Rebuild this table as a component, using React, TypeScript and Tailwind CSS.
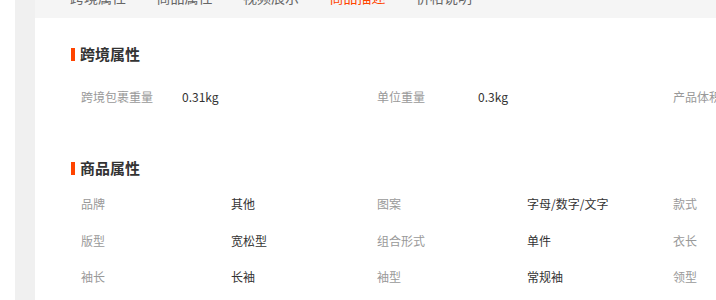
import React from 'react';

const tabs = ['跨境属性', '商品属性', '视频展示', '商品描述', '价格说明'];

const crossBorder = [
  ['跨境包裹重量', '0.31kg'],
  ['单位重量', '0.3kg'],
  ['产品体积', ''],
];

const goodsRows = [
  [['品牌', '其他'], ['图案', '字母/数字/文字'], ['款式', '']],
  [['版型', '宽松型'], ['组合形式', '单件'], ['衣长', '']],
  [['袖长', '长袖'], ['袖型', '常规袖'], ['领型', '']],
];

function SectionTitle({ text }: { text: string }) {
  return (
    <div className="flex items-center h-[20px]">
      <span className="w-[4px] h-[13px] bg-[#ff4400] mr-[5px]" />
      <span className="text-[15px] font-bold text-[#333] leading-[20px]">{text}</span>
    </div>
  );
}

export default function App() {
  return (
    <div
      className="flex h-[300px] w-[716px] bg-white overflow-hidden"
      style={{ fontFamily: '"Microsoft YaHei", "Noto Sans CJK SC", sans-serif' }}
    >
      <div className="w-[15px] shrink-0" />
      <div className="w-[20px] shrink-0 bg-[#f0f0f0]" />
      <div className="flex-1 min-w-0">
        <div className="h-[18px] bg-[#f5f5f5] overflow-hidden">
          <div className="flex gap-[30.5px] pl-[35px] -mt-[10px] text-[14px] leading-[14px] text-[#666]">
            {tabs.map((t) => (
              <span key={t} className={t === '商品描述' ? 'text-[#ff4400]' : ''}>
                {t}
              </span>
            ))}
          </div>
        </div>

        <div className="pl-[36px] pt-[26px]">
          <SectionTitle text="跨境属性" />
          <div className="flex mt-[23px] pl-[10px] text-[12px] leading-[20px] whitespace-nowrap">
            {crossBorder.map(([k, v]) => (
              <div key={k} className="flex w-[296px] shrink-0">
                <span className="w-[101px] text-[#999]">{k}</span>
                <span className="text-[#333]">{v}</span>
              </div>
            ))}
          </div>

          <div className="mt-[51px]">
            <SectionTitle text="商品属性" />
          </div>
          <div className="mt-[8px] pl-[10px] text-[12px] whitespace-nowrap">
            {goodsRows.map((row, i) => (
              <div key={i} className="flex h-[36.5px] items-center">
                {row.map(([k, v]) => (
                  <div key={k} className="flex w-[296px] shrink-0">
                    <span className="w-[150px] text-[#999]">{k}</span>
                    <span className="text-[#333]">{v}</span>
                  </div>
                ))}
              </div>
            ))}
          </div>
        </div>
      </div>
    </div>
  );
}
